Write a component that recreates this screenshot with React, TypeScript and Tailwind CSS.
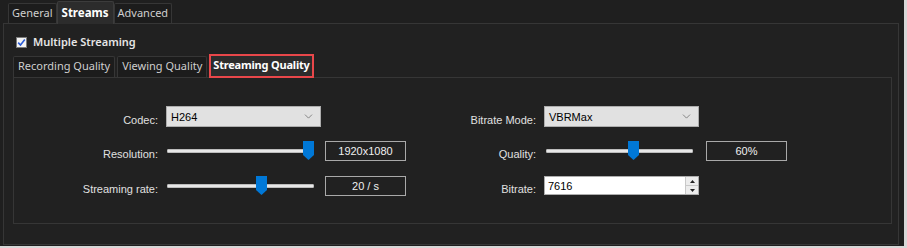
import { ChevronDown } from "lucide-react";

const ui = { fontFamily: '"Noto Sans", "Liberation Sans", sans-serif' };
const lbl = { fontFamily: '"Liberation Sans", Arial, sans-serif' };

const TopTab = ({ label, active }: { label: string; active?: boolean }) => (
  <div
    className={
      active
        ? "relative z-10 -mb-px flex h-[23px] items-center self-end rounded-t-[2px] border border-b-0 border-[#3c3c3c] bg-[#2c2c2c] px-[4px] text-[11.5px] font-bold text-white"
        : "flex h-[20px] items-center self-end rounded-t-[2px] border border-b-0 border-[#363636] bg-[#1c1c1c] px-[3px] text-[11px] text-[#cfcfcf]"
    }
  >
    {label}
  </div>
);

const SubTab = ({ label, active }: { label: string; active?: boolean }) => (
  <div
    className={
      active
        ? "relative z-10 -mb-px flex h-[24px] items-center self-end border-2 border-[#e8474a] bg-[#2c2c2c] px-[2px] text-[11px] font-bold tracking-[-0.2px] text-white"
        : "flex h-[21px] items-center self-end rounded-t-[2px] border border-b-0 border-[#363636] bg-[#1c1c1c] px-[4px] text-[11px] text-[#cfcfcf]"
    }
  >
    {label}
  </div>
);

const Select = ({ value }: { value: string }) => (
  <div className="flex h-[21px] w-[155px] items-center justify-between border border-[#adadad] bg-[#e1e1e1] pl-[4px] pr-[5px] text-[11px] text-black">
    <span>{value}</span>
    <ChevronDown size={13} strokeWidth={1.2} className="text-[#555]" />
  </div>
);

const Slider = ({ pct }: { pct: number }) => (
  <div className="relative flex h-[20px] w-[147px] items-center">
    <div className="h-[4px] w-full rounded-[1px] border border-[#bcbcbc] bg-[#e7e7e7]" />
    <svg
      width="11"
      height="19"
      viewBox="0 0 11 19"
      className="absolute top-[0px]"
      style={{ left: `calc(${pct}% - 5px)` }}
    >
      <path d="M0 0 H11 V14 L5.5 19 L0 14 Z" fill="#0078d7" />
    </svg>
  </div>
);

const ValueBox = ({ value }: { value: string }) => (
  <div className="flex h-[20px] w-[81px] items-center justify-center border border-[#a9a9a9] text-[11px] text-[#f0f0f0]">
    {value}
  </div>
);

const Row = ({ label, children, labelW }: { label: string; labelW: string; children: React.ReactNode }) => (
  <div className="flex items-center">
    <div className={`${labelW} pr-[8px] pt-[6px] text-right text-[11px] text-[#e0e0e0]`}>{label}</div>
    {children}
  </div>
);

export default function App() {
  return (
    <div className="h-[248px] w-[907px] bg-[#d8d8d8]" style={ui}>
      <div className="flex h-[246px] w-[904px] flex-col bg-[#1f1f1f] pl-[3px] pr-[5px]">
        <div className="flex h-[23px] items-end pl-[5px]">
          <TopTab label="General" />
          <TopTab label="Streams" active />
          <TopTab label="Advanced" />
        </div>
        <div className="flex h-[222px] flex-col border border-[#363636] bg-[#212121] pl-[9px] pr-[6px]">
          <div className="mt-[10px] flex items-center gap-[6px] pl-[3px]">
            <div className="flex h-[11px] w-[11px] items-center justify-center border border-[#7a7a7a] bg-[#f3f3f3]">
              <svg width="9" height="9" viewBox="0 0 9 9">
                <path d="M1.2 4.6 L3.5 7 L7.8 1.6" fill="none" stroke="#2a5bd7" strokeWidth="1.6" />
              </svg>
            </div>
            <span className="text-[11px] font-semibold text-[#e6e6e6]">Multiple Streaming</span>
          </div>
          <div className="mt-[4px] flex h-[22px] items-end gap-[2px]">
            <SubTab label="Recording Quality" />
            <SubTab label="Viewing Quality" />
            <SubTab label="Streaming Quality" active />
          </div>
          <div className="flex h-[147px] border border-[#363636] bg-[#212121] pt-[28px]" style={lbl}>
            <div className="flex flex-col gap-[12px]">
              <Row label="Codec:" labelW="w-[152px]">
                <Select value="H264" />
              </Row>
              <Row label="Resolution:" labelW="w-[152px]">
                <div className="ml-[1px] mr-[11px]">
                  <Slider pct={96} />
                </div>
                <ValueBox value="1920x1080" />
              </Row>
              <Row label="Streaming rate:" labelW="w-[152px]">
                <div className="ml-[1px] mr-[11px]">
                  <Slider pct={64} />
                </div>
                <ValueBox value="20 / s" />
              </Row>
            </div>
            <div className="flex flex-col gap-[12px]">
              <Row label="Bitrate Mode:" labelW="w-[138px]">
                <Select value="VBRMax" />
              </Row>
              <Row label="Quality:" labelW="w-[138px]">
                <div className="ml-[2px] mr-[13px]">
                  <Slider pct={59} />
                </div>
                <ValueBox value="60%" />
              </Row>
              <Row label="Bitrate:" labelW="w-[138px]">
                <div className="flex h-[19px] w-[155px] items-center border border-[#adadad] bg-white text-[11px] text-black">
                  <span className="flex-1 pl-[3px]">7616</span>
                  <div className="flex h-full w-[13px] flex-col border-l border-[#c8c8c8] bg-[#ececec]">
                    <div className="flex flex-1 items-center justify-center border-b border-[#c8c8c8]">
                      <svg width="5" height="3" viewBox="0 0 5 3"><path d="M0 3 L2.5 0 L5 3 Z" fill="#222" /></svg>
                    </div>
                    <div className="flex flex-1 items-center justify-center">
                      <svg width="5" height="3" viewBox="0 0 5 3"><path d="M0 0 L2.5 3 L5 0 Z" fill="#222" /></svg>
                    </div>
                  </div>
                </div>
              </Row>
            </div>
          </div>
        </div>
      </div>
    </div>
  );
}
